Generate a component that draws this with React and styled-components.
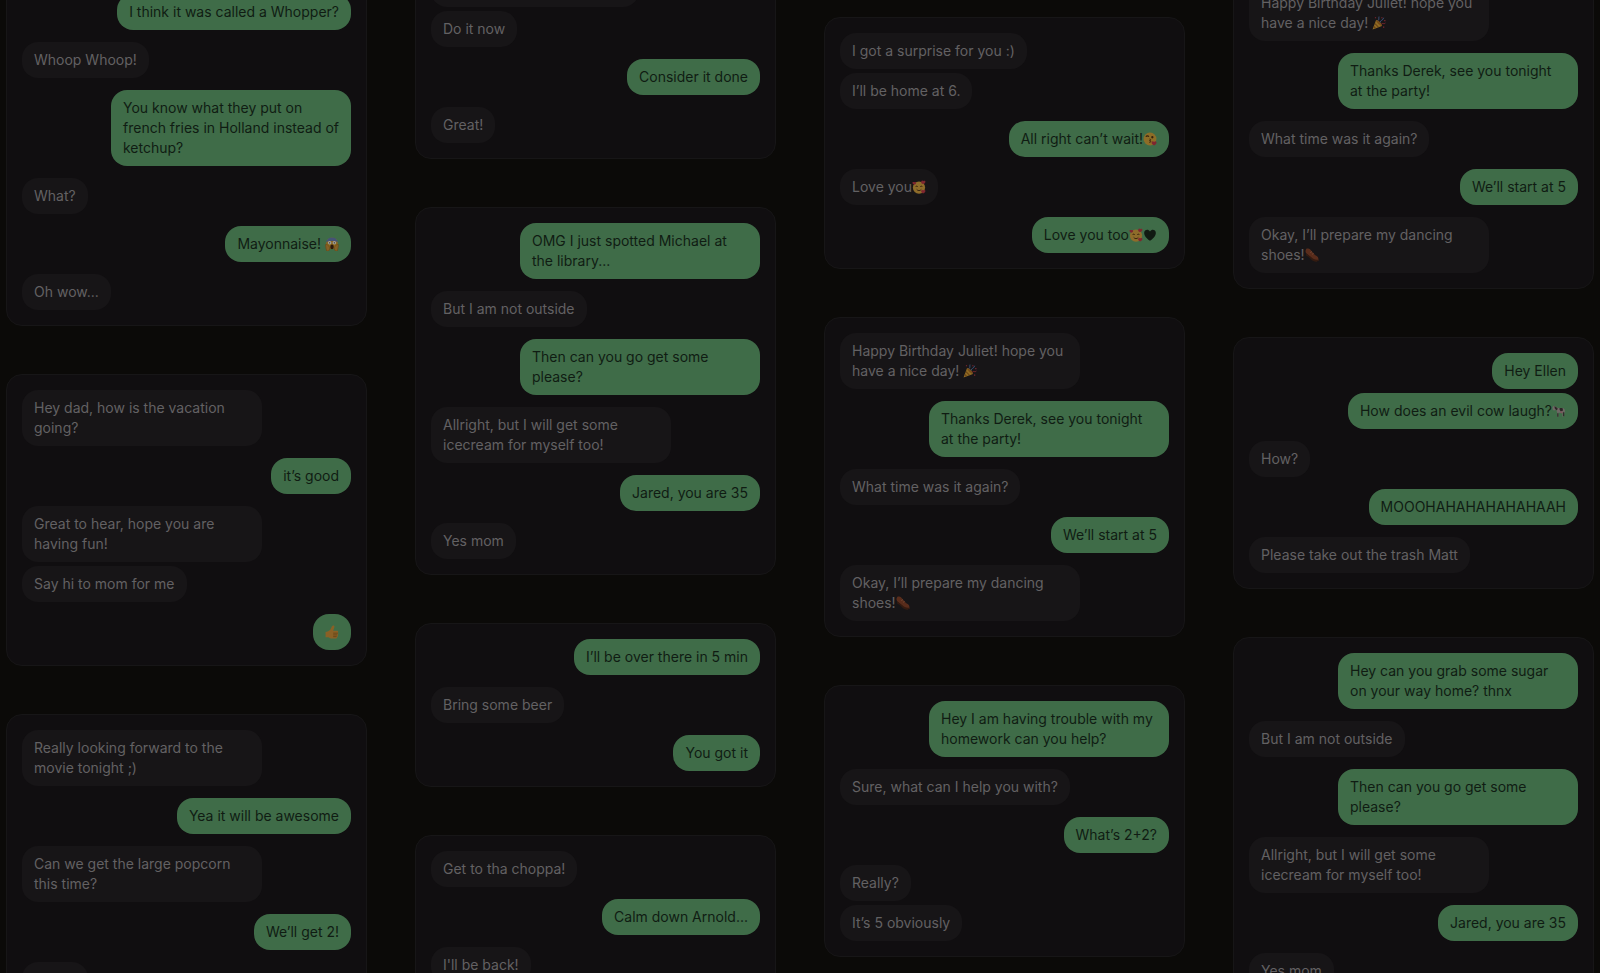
import React from "react";
import styled, { createGlobalStyle } from "styled-components";

const GlobalStyle = createGlobalStyle`
  *, *::before, *::after { box-sizing: border-box; }
  body {
    margin: 0;
    background: #0b0a08;
    font-family: Inter, "Liberation Sans", sans-serif;
  }
`;

const Wall = styled.main`
  display: grid;
  grid-template-columns: repeat(4, minmax(0, 1fr));
  gap: 48px;
  height: 100vh;
  padding: 0 6px;
  overflow: hidden;
`;

const Column = styled.div`
  display: flex;
  flex-direction: column;
  gap: 48px;
  margin-top: ${(p) => p.$scroll}px;
`;

const Card = styled.section`
  display: flex;
  flex: none;
  flex-direction: column;
  gap: 12px;
  padding: 15px;
  border: 1px solid #171617;
  border-radius: 16px;
  background: #100e10;
`;

const Turn = styled.div`
  display: flex;
  flex-direction: column;
  align-items: ${(p) => (p.$mine ? "flex-end" : "flex-start")};
  gap: 4px;
`;

const Bubble = styled.p`
  width: ${(p) => (p.$width ? `${p.$width}px` : "auto")};
  max-width: 240px;
  min-height: 36px;
  margin: 0;
  padding: 8px 12px;
  border-radius: 16px;
  background: ${(p) => (p.$mine ? "#3f6c48" : "#171517")};
  color: ${(p) => (p.$mine ? "#101c13" : "#636163")};
  font-size: 14px;
  line-height: 20px;
`;

const Glyph = styled.svg`
  width: 14px;
  height: 14px;
  vertical-align: -2px;
  filter: brightness(0.62) saturate(0.85);
`;

const EMOJI = {
  "😱": (
    <>
      <circle cx="12" cy="11" r="10" fill="#e8a51c" />
      <path d="M2 9C3 3 8 1 12 1s9 2 10 8C18 6 6 6 2 9Z" fill="#6a86c8" />
      <circle cx="8" cy="10" r="3" fill="#fff" />
      <circle cx="16" cy="10" r="3" fill="#fff" />
      <circle cx="8" cy="10" r="1" fill="#432a10" />
      <circle cx="16" cy="10" r="1" fill="#432a10" />
      <ellipse cx="12" cy="17" rx="3" ry="4" fill="#4b2510" />
      <path d="M1 13c2-1 4 1 6 3 2 3 1 6-1 8H3c-1-3-2-7-2-11ZM23 13c-2-1-4 1-6 3-2 3-1 6 1 8h3c1-3 2-7 2-11Z" fill="#e09a2b" stroke="#b86a10" strokeWidth="1" />
    </>
  ),
  "😘": (
    <>
      <circle cx="12" cy="12" r="11" fill="#eeb02a" />
      <path d="M5 8c1-2 4-2 5 0" fill="none" stroke="#5b3510" strokeWidth="2" />
      <circle cx="16" cy="9" r="2" fill="#5b3510" />
      <path d="M11 12c3 0 3 3 0 3 3 0 3 3 0 3" fill="none" stroke="#5b3510" strokeWidth="1.5" />
      <path d="M19 23c-3-2-5-4-4-6s3-1 4 0c1-1 3-2 4 0s-1 4-4 6Z" fill="#e03848" />
    </>
  ),
  "🥰": (
    <>
      <circle cx="12" cy="13" r="10.5" fill="#eeae30" />
      <path d="M6 12c1-2 3-2 4 0M14 12c1-2 3-2 4 0M8 16c2 3 6 3 8 0" fill="none" stroke="#5b3510" strokeWidth="1.6" />
      <path d="M19 7c-3-1-4-3-3-5s3-1 3 0c1-1 4-1 4 1s-2 3-4 4ZM4 8C1 7 0 5 1 4s2-1 3 0c1-1 3-1 3 1s-1 2-3 3ZM19 23c-3-2-4-3-3-5s2-1 3 0c1-1 4-1 4 1s-2 3-4 4Z" fill="#e03848" />
    </>
  ),
  "🖤": (
    <path d="M12 22C4 16 2 12 2 8c0-5 7-7 10-2 3-5 10-3 10 2 0 4-2 8-10 14Z" fill="#182b1c" />
  ),
  "🎉": (
    <>
      <path d="m1 23 6-16c4 1 9 6 10 10Z" fill="#f0ae26" />
      <path d="m5 13 6 6M3 18l3 3" stroke="#b86a10" strokeWidth="2" />
      <path d="M7 7c4 0 10 6 10 10-4 0-10-6-10-10Z" fill="#c77817" />
      <path d="M10 8c3-2 1-4 2-7M14 11c0-4 5-3 6-8" fill="none" stroke="#5f8fe0" strokeWidth="1.5" />
      <path d="M16 14c3-3 4 1 7-2" fill="none" stroke="#e8384c" strokeWidth="1.5" />
      <path d="M5 2h2v2H5ZM16 2h2v2h-2ZM21 7h2v2h-2ZM19 18h2v2h-2Z" fill="#e8384c" />
    </>
  ),
  "👞": (
    <>
      <path d="M3 1c3 0 5 0 7 3l7 8c3 2 6 3 6 7v3c-5 2-9-1-12-5L2 9C0 6 1 3 3 1Z" fill="#9a4525" />
      <path d="M2 9v4l4 2 6 6c4 3 9 3 11 1v-2c-5 1-9-1-12-4Z" fill="#5a2a16" />
      <path d="m9 8 3-2M12 11l3-2" stroke="#d98a5d" strokeWidth="1" />
    </>
  ),
  "🐄": (
    <>
      <path d="M1 5 4 3l3 2 3 2h9l3 3v8l-1-4-1-2v10h-2v-7h-7v7H9v-7l-2-5-4 1-2-2Z" fill="#b5a5a2" />
      <path d="m4 4 3 1 3 3-2 3-3-3ZM13 7h5l1 4-4 2-2-3ZM19 14h2v7h-2ZM9 16h2v6H9Z" fill="#4a3c3d" />
      <path d="M14 13h4v3h-3Z" fill="#d88492" />
    </>
  ),
  "👍": (
    <>
      <path d="M1 12c3-1 6-2 8-4l3-6c2-2 5-1 4 2l-2 6h7c2 0 2 3 1 3 1 1 1 3 0 4 1 1 0 3-1 3 0 2-1 3-3 3h-8l-4-2H1Z" fill="#ea9a2a" />
      <path d="M14 14h8M14 17h7M14 20h6" stroke="#9a6014" strokeWidth="1.2" />
    </>
  ),
};

const EMOJI_PATTERN = new RegExp(`(${Object.keys(EMOJI).join("|")})`, "u");

function RichText({ text }) {
  return text.split(EMOJI_PATTERN).map((part, i) =>
    EMOJI[part] ? (
      <Glyph key={i} viewBox="0 0 24 24" role="img" aria-label={part}>
        {EMOJI[part]}
      </Glyph>
    ) : (
      part
    )
  );
}

// A turn is a run of consecutive messages by one speaker.
const me = (...messages) => ({ mine: true, messages });
const them = (...messages) => ({ mine: false, messages });

// A message cut off by the viewport edge, where only its bubble shows.
const cropped = (width) => ({ width });

const birthday = [
  them("Happy Birthday Juliet! hope you have a nice day! 🎉"),
  me("Thanks Derek, see you tonight at the party!"),
  them("What time was it again?"),
  me("We’ll start at 5"),
  them("Okay, I’ll prepare my dancing shoes!👞"),
];

const icecream = (opening) => [
  me(opening),
  them("But I am not outside"),
  me("Then can you go get some please?"),
  them("Allright, but I will get some icecream for myself too!"),
  me("Jared, you are 35"),
  them("Yes mom"),
];

const COLUMNS = [
  {
    scroll: -22,
    chats: [
      [
        me("I think it was called a Whopper?"),
        them("Whoop Whoop!"),
        me("You know what they put on french fries in Holland instead of ketchup?"),
        them("What?"),
        me("Mayonnaise! 😱"),
        them("Oh wow..."),
      ],
      [
        them("Hey dad, how is the vacation going?"),
        me("it’s good"),
        them("Great to hear, hope you are having fun!", "Say hi to mom for me"),
        me("👍"),
      ],
      [
        them("Really looking forward to the movie tonight ;)"),
        me("Yea it will be awesome"),
        them("Can we get the large popcorn this time?"),
        me("We’ll get 2!"),
        them(cropped(66)),
      ],
    ],
  },
  {
    scroll: -45,
    chats: [
      [them(cropped(208), "Do it now"), me("Consider it done"), them("Great!")],
      icecream("OMG I just spotted Michael at the library..."),
      [me("I’ll be over there in 5 min"), them("Bring some beer"), me("You got it")],
      [them("Get to tha choppa!"), me("Calm down Arnold..."), them("I'll be back!")],
    ],
  },
  {
    scroll: 17,
    chats: [
      [
        them("I got a surprise for you :)", "I’ll be home at 6."),
        me("All right can’t wait!😘"),
        them("Love you🥰"),
        me("Love you too🥰🖤"),
      ],
      birthday,
      [
        me("Hey I am having trouble with my homework can you help?"),
        them("Sure, what can I help you with?"),
        me("What’s 2+2?"),
        them("Really?", "It’s 5 obviously"),
      ],
    ],
  },
  {
    scroll: -31,
    chats: [
      birthday,
      [
        me("Hey Ellen", "How does an evil cow laugh?🐄"),
        them("How?"),
        me("MOOOHAHAHAHAHAHAAH"),
        them("Please take out the trash Matt"),
      ],
      icecream("Hey can you grab some sugar on your way home? thnx"),
    ],
  },
];

function Chat({ turns }) {
  return (
    <Card>
      {turns.map((turn, i) => (
        <Turn key={i} $mine={turn.mine}>
          {turn.messages.map((message, j) =>
            message.width ? (
              <Bubble key={j} $mine={turn.mine} $width={message.width} />
            ) : (
              <Bubble key={j} $mine={turn.mine}>
                <RichText text={message} />
              </Bubble>
            )
          )}
        </Turn>
      ))}
    </Card>
  );
}

export default function App() {
  return (
    <>
      <GlobalStyle />
      <Wall>
        {COLUMNS.map((column, i) => (
          <Column key={i} $scroll={column.scroll}>
            {column.chats.map((turns, j) => (
              <Chat key={j} turns={turns} />
            ))}
          </Column>
        ))}
      </Wall>
    </>
  );
}
